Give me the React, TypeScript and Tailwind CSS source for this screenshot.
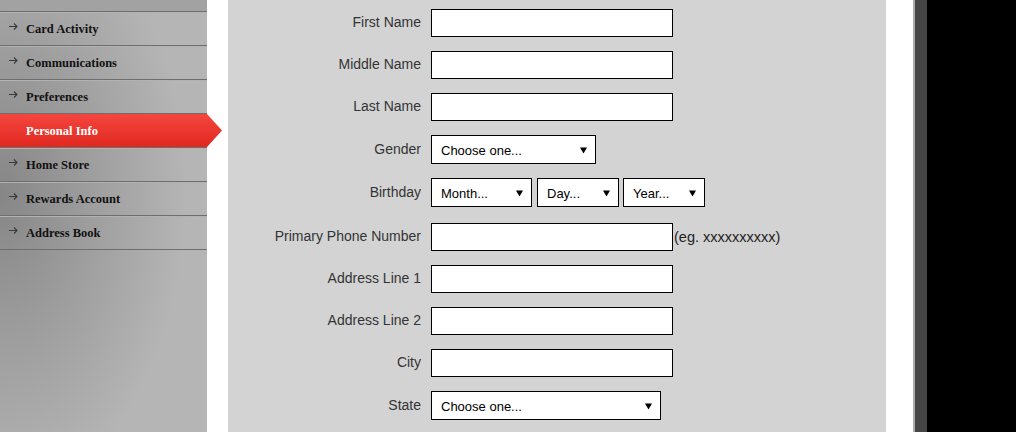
import type { ReactNode } from 'react'

const NAV = [
  { label: 'Card Activity' },
  { label: 'Communications' },
  { label: 'Preferences' },
  { label: 'Personal Info', active: true },
  { label: 'Home Store' },
  { label: 'Rewards Account' },
  { label: 'Address Book' },
]

function Caret() {
  return (
    <svg width="7" height="7" viewBox="0 0 7 7" className="pointer-events-none absolute right-[8px] top-1/2 -translate-y-1/2">
      <polygon points="0,1 7,1 3.5,7" fill="#000" />
    </svg>
  )
}

function NavArrow() {
  return (
    <svg width="9" height="7" viewBox="0 0 9 7" className="ml-[9px] mr-[8px] -translate-y-[3px]">
      <path d="M0 3.5H8M5 0.5L8 3.5L5 6.5" fill="none" stroke="#3a3a3a" strokeWidth="1.1" />
    </svg>
  )
}

function Select({ text, width }: { text: string; width: number }) {
  return (
    <div
      className="relative flex h-[29px] items-center border border-black bg-white pl-[9px] pt-[2px] text-[13px] text-black"
      style={{ width }}
    >
      <span>{text}</span>
      <Caret />
    </div>
  )
}

function TextBox({ width = 242 }: { width?: number }) {
  return <input type="text" className="h-[28px] border border-black bg-white outline-none" style={{ width }} />
}

function Row({ label, children, gap = 14 }: { label: string; children: ReactNode; gap?: number }) {
  return (
    <div className="flex items-center" style={{ marginBottom: gap }}>
      <label className="w-[193px] text-right text-[14px] leading-none text-[#333] -translate-y-[1px]">{label}</label>
      <div className="ml-[10px] flex items-center">{children}</div>
    </div>
  )
}

export default function App() {
  return (
    <div className="flex h-[432px] w-[1016px] overflow-hidden bg-white font-['Liberation_Sans',Arial,sans-serif]">
      {/* sidebar */}
      <nav className="relative z-10 h-full w-[207px] shrink-0 bg-[radial-gradient(ellipse_90%_70%_at_0%_45%,#868686_0%,#9e9e9e_50%,#b5b5b5_100%)] font-['Liberation_Serif','Times_New_Roman',serif]">
        <div className="h-[12px] border-b border-[#6e6e6e] bg-[#a2a2a2]" />
        {NAV.map((item) =>
          item.active ? (
            <div key={item.label} className="relative h-[34px] border-b border-[#6e6e6e]">
              <div className="flex h-[33px] items-center bg-[linear-gradient(180deg,#f4463f_0%,#e0281f_100%)] pl-[26px] pt-[2px] text-[12.5px] font-bold text-white">
                {item.label}
              </div>
              <div className="absolute left-full top-0 h-[33px] w-[15px] bg-[linear-gradient(180deg,#f4463f_0%,#e0281f_100%)] [clip-path:polygon(0_0,0_100%,100%_50%)]" />
            </div>
          ) : (
            <div
              key={item.label}
              className="flex h-[34px] items-center border-b border-[#6e6e6e] pt-[2px] shadow-[inset_0_1px_0_#b2b2b2] text-[12.5px] font-bold text-[#111]"
            >
              <NavArrow />
              <span>{item.label}</span>
            </div>
          ),
        )}
      </nav>

      {/* gutter */}
      <div className="w-[21px] shrink-0 bg-white" />

      {/* form panel */}
      <main className="h-full w-[658px] shrink-0 bg-[#d3d3d3] pt-[9px]">
        <Row label="First Name"><TextBox /></Row>
        <Row label="Middle Name"><TextBox /></Row>
        <Row label="Last Name"><TextBox /></Row>
        <Row label="Gender"><Select text="Choose one..." width={165} /></Row>
        <Row label="Birthday" gap={16}>
          <div className="flex">
            <Select text="Month..." width={101} />
            <div className="ml-[5px]"><Select text="Day..." width={82} /></div>
            <div className="ml-[4px]"><Select text="Year..." width={82} /></div>
          </div>
        </Row>
        <Row label="Primary Phone Number">
          <TextBox />
          <span className="ml-[1px] text-[14.5px] leading-none text-[#222]">(eg. xxxxxxxxxx)</span>
        </Row>
        <Row label="Address Line 1"><TextBox /></Row>
        <Row label="Address Line 2"><TextBox /></Row>
        <Row label="City"><TextBox /></Row>
        <Row label="State"><Select text="Choose one..." width={230} /></Row>
      </main>

      {/* right edge */}
      <div className="w-[27px] shrink-0 bg-white" />
      <div className="w-[2px] shrink-0 bg-[#ababab]" />
      <div className="w-[12px] shrink-0 bg-[#464646]" />
      <div className="flex-1 bg-black" />
    </div>
  )
}
